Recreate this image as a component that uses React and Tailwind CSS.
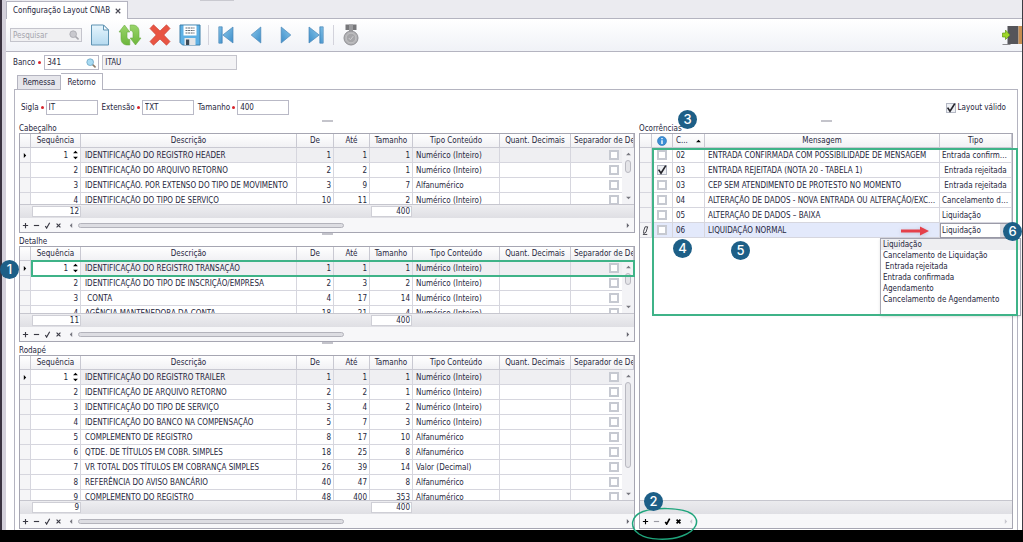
import clsx from 'clsx';

/* ── Data ─────────────────────────────────────────── */
const INT = 'Numérico (Inteiro)';
const ALFA = 'Alfanumérico';

const HEADER_ROWS = [
  [1, 'IDENTIFICAÇÃO DO REGISTRO HEADER', 1, 1, 1, INT],
  [2, 'IDENTIFICAÇÃO DO ARQUIVO RETORNO', 2, 2, 1, INT],
  [3, 'IDENTIFICAÇÃO. POR EXTENSO DO TIPO DE MOVIMENTO', 3, 9, 7, ALFA],
  [4, 'IDENTIFICAÇÃO DO TIPO DE SERVIÇO', 10, 11, 2, INT],
];

const DETAIL_ROWS = [
  [1, 'IDENTIFICAÇÃO DO REGISTRO TRANSAÇÃO', 1, 1, 1, INT],
  [2, 'IDENTIFICAÇÃO DO TIPO DE INSCRIÇÃO/EMPRESA', 2, 3, 2, INT],
  [3, '\u00a0CONTA', 4, 17, 14, INT],
  [4, 'AGÊNCIA MANTENEDORA DA CONTA', 18, 21, 4, INT],
];

const TRAILER_ROWS = [
  [1, 'IDENTIFICAÇÃO DO REGISTRO TRAILER', 1, 1, 1, INT],
  [2, 'IDENTIFICAÇÃO DE ARQUIVO RETORNO', 2, 2, 1, INT],
  [3, 'IDENTIFICAÇÃO DO TIPO DE SERVIÇO', 3, 4, 2, INT],
  [4, 'IDENTIFICAÇÃO DO BANCO NA COMPENSAÇÃO', 5, 7, 3, INT],
  [5, 'COMPLEMENTO DE REGISTRO', 8, 17, 10, ALFA],
  [6, 'QTDE. DE TÍTULOS EM COBR. SIMPLES', 18, 25, 8, ALFA],
  [7, 'VR TOTAL DOS TÍTULOS EM COBRANÇA SIMPLES', 26, 39, 14, 'Valor (Decimal)'],
  [8, 'REFERÊNCIA DO AVISO BANCÁRIO', 40, 47, 8, ALFA],
  [9, 'COMPLEMENTO DO REGISTRO', 48, 400, 353, ALFA],
];

const OCCURRENCES = [
  { code: '02', msg: 'ENTRADA CONFIRMADA COM POSSIBILIDADE DE MENSAGEM', type: 'Entrada confirmada' },
  { code: '03', msg: 'ENTRADA REJEITADA (NOTA 20 - TABELA 1)', type: '\u00a0Entrada rejeitada', checked: true },
  { code: '03', msg: 'CEP SEM ATENDIMENTO DE PROTESTO NO MOMENTO', type: '\u00a0Entrada rejeitada' },
  { code: '04', msg: 'ALTERAÇÃO DE DADOS - NOVA ENTRADA OU ALTERAÇÃO/EXCLUSÃO', type: 'Cancelamento de Liquidação' },
  { code: '05', msg: 'ALTERAÇÃO DE DADOS – BAIXA', type: 'Liquidação' },
];

const TYPES = [
  'Liquidação',
  'Cancelamento de Liquidação',
  '\u00a0Entrada rejeitada',
  'Entrada confirmada',
  'Agendamento',
  'Cancelamento de Agendamento',
];

const TH = 'border-b border-r border-[#c9c9d2] bg-linear-to-b from-white to-[#f1f1f4] p-0 font-normal text-center whitespace-nowrap overflow-hidden';
const TD = 'border-b border-r border-[#d6d6de] p-0 whitespace-nowrap overflow-hidden';

/* ── Small pieces ─────────────────────────────────── */
const Marker = ({ n, className }) => (
  <span className={clsx('absolute z-30 flex size-[19px] items-center justify-center rounded-full bg-[#1d5f87] font-[Inter,sans-serif] text-[13px] font-medium text-white', className)}>
    {n}
  </span>
);

const Check = ({ id, label, checked = false }) => (
  <span className="relative inline-block size-[10px] align-middle">
    <input
      id={id}
      type="checkbox"
      aria-label={label}
      defaultChecked={checked}
      className={clsx('block size-[10px] appearance-none', checked ? 'border border-[#b4b8c4] bg-[#eef0f4]' : 'border-2 border-[#c6c9d1] bg-white')}
    />
    {checked && (
      <svg viewBox="0 0 10 10" className="pointer-events-none absolute inset-0 size-[10px] overflow-visible" fill="none" stroke="#25252c" strokeWidth="1.7">
        <path d="M1.6 4.6 4 8.2 8.8.6" />
      </svg>
    )}
  </span>
);

const Arrow = ({ dir, className }) => {
  const d = { up: 'M0 4 3 1l3 3z', down: 'M0 1h6L3 4z', left: 'M4 0v6L1 3z', right: 'M1 0v6l3-3z' }[dir];
  const flat = dir === 'up' || dir === 'down';
  return (
    <svg viewBox={flat ? '0 0 6 5' : '0 0 5 6'} className={clsx(flat ? 'h-[4px] w-[5px]' : 'h-[5px] w-[4px]', 'shrink-0', className)} fill="currentColor">
      <path d={d} />
    </svg>
  );
};

const Dot = () => <span className="size-[3px] shrink-0 rounded-full bg-[#d8232a]" />;

const Field = ({ id, label, value }) => (
  <div className="flex items-center gap-[2px]">
    <label htmlFor={id}>{label}</label>
    <Dot />
    <input id={id} defaultValue={value} className="h-[15px] w-[52px] border border-[#b9b9c6] bg-white px-[2px] outline-none" />
  </div>
);

const Grip = () => <div className="mx-auto h-[2px] w-[11px] bg-[#c4c4cb]" />;

const Lens = ({ muted }) => (
  <svg viewBox="0 0 12 12" className="size-[10px] shrink-0">
    <path d="m7.5 7.5 3.3 3.2" stroke={muted ? '#a7a7ad' : '#8c7b68'} strokeWidth="2" strokeLinecap="round" />
    <circle cx="5" cy="5" r="4" fill={muted ? '#c9c9ce' : '#a8dbf3'} stroke={muted ? '#a9a9b0' : '#71a8c6'} />
  </svg>
);

/* ── Toolbar ──────────────────────────────────────── */
const ToolButton = ({ label, className, children }) => (
  <button type="button" aria-label={label} className={clsx('flex shrink-0 items-center justify-center', className)}>
    {children}
  </button>
);

const NavIcon = ({ flip, bar }) => (
  <svg viewBox="0 0 16 18" className={clsx('h-[18px] w-[16px]', flip && '-scale-x-100')} fill="url(#navBlue)" stroke="#4a86b8" strokeWidth=".7">
    {bar && <path d="M.8.8h3.400v16.400H.8z" />}
    {bar ? <path d="M15 1v16L4.800 9z" /> : <path d="M12.800 1v16L3.200 9z" />}
  </svg>
);

const Toolbar = () => (
  <div className="flex h-[33px] shrink-0 items-center border-b border-[#b4b4c0] bg-linear-to-b from-white to-[#f0f2f7] pl-1">
    <svg className="absolute size-0" aria-hidden="true">
      <defs>
        <linearGradient id="navBlue" x1="0" x2="1" y1="0" y2="1">
          <stop offset="0" stopColor="#8cc8ea" />
          <stop offset="1" stopColor="#3b8dca" />
        </linearGradient>
        <linearGradient id="pageBlue" x1="0" x2="0" y1="0" y2="1">
          <stop offset="0" stopColor="#e6f5fd" />
          <stop offset="1" stopColor="#b5daf0" />
        </linearGradient>
        <linearGradient id="leaf" x1="0" x2="0" y1="0" y2="1">
          <stop offset="0" stopColor="#9ad56b" />
          <stop offset="1" stopColor="#6db63c" />
        </linearGradient>
      </defs>
    </svg>
    <div className="mr-[7px] flex h-[14px] w-[72px] items-center border border-[#c4c4cc] bg-[#f0f0f2] px-[2px]">
      <input placeholder="Pesquisar" aria-label="Pesquisar" className="w-0 grow bg-transparent outline-none placeholder:text-[#a4a4ac]" />
      <Lens muted />
    </div>
    <ToolButton label="Novo" className="w-[22px]">
      <svg viewBox="0 0 20 22" className="h-[22px] w-[20px]">
        <path d="M1.5 1h12l5 5v15h-17z" fill="url(#pageBlue)" stroke="#5f93b3" />
        <path d="M13.5 1v5h5z" fill="#f3fafe" stroke="#5f93b3" strokeLinejoin="round" />
      </svg>
    </ToolButton>
    <ToolButton label="Atualizar" className="ml-[7px] w-[24px]">
      <svg viewBox="0 0 24 22" className="h-[22px] w-[24px]" fill="url(#leaf)" stroke="#6aab41" strokeWidth=".6" strokeLinejoin="round">
        <path d="M6.500 1 1 8h2v6.500C3 18.500 5.500 21 9.500 21h2.300v-5.500c-2-.2-2.800-1-2.800-2.800V8h2.800z" />
        <path d="M17.500 21 23 14h-2V7.500C21 3.500 18.500 1 14.500 1h-2.300v5.500c2 .2 2.800 1 2.800 2.800V14h-2.800z" />
      </svg>
    </ToolButton>
    <ToolButton label="Excluir" className="ml-[6px] w-[24px]">
      <svg viewBox="0 0 24 24" className="size-[24px]" fill="#e85443" stroke="#cc4436" strokeWidth=".7" strokeLinejoin="round">
        <path d="M2 5.500 5.500 1.800 12 8l6.500-6.200L22 5.500 15.800 12l6.200 6.500-3.500 3.700L12 16l-6.500 6.200L2 18.500 8.200 12z" />
      </svg>
    </ToolButton>
    <ToolButton label="Salvar" className="ml-[7px] w-[22px]">
      <svg viewBox="0 0 22 22" className="size-[22px]">
        <path d="M1 1h20v20H3.500L1 18.500z" fill="#5eb0e4" stroke="#3f7ea8" />
        <path d="M4.500 1.500h13v10h-13z" fill="#fff" />
        <path d="M6.500 4h9M6.500 6.500h9M6.500 9h9" stroke="#5d6670" strokeDasharray="2 .6" />
        <path d="M5.500 14h11v7h-11z" fill="#e4e6e8" />
        <path d="M7 15.500h3.200V21H7z" fill="#3d4a56" />
      </svg>
    </ToolButton>
    <span className="mx-[7px] h-[20px] w-px shrink-0 bg-[#d3d3dc]" />
    <div className="flex items-center gap-[14px] pl-[2px]">
      <ToolButton label="Primeiro"><NavIcon bar /></ToolButton>
      <ToolButton label="Anterior"><NavIcon /></ToolButton>
      <ToolButton label="Próximo"><NavIcon flip /></ToolButton>
      <ToolButton label="Último"><NavIcon flip bar /></ToolButton>
    </div>
    <span className="mx-[9px] h-[20px] w-px shrink-0 bg-[#d3d3dc]" />
    <ToolButton label="Homologar">
      <svg viewBox="0 0 16 22" className="h-[22px] w-[16px]">
        <path d="M2.500.5h11V6h-11z" fill="#77777a" />
        <path d="M6 .5h4v7H6z" fill="#9b9b9e" />
        <circle cx="8" cy="14" r="7" fill="#b3b3b6" stroke="#8f8f93" />
        <circle cx="8" cy="14" r="4.800" fill="#a6a6a9" stroke="#c6c6c8" strokeWidth=".8" />
        <path d="m5.800 14 1.600 1.800 2.800-3.600" fill="none" stroke="#cdcdd0" />
      </svg>
    </ToolButton>
    <ToolButton label="Sair" className="ml-auto">
      <svg viewBox="0 0 20 22" className="h-[22px] w-[20px]">
        <path d="M5.500 2h11v18h-11z" fill="#55555a" />
        <path d="M16.500 2H20v18h-3.500z" fill="#c68e52" />
        <path d="M.5 20.500h8" stroke="#8c8c90" />
        <path d="M.5 9h3V6L8 11l-4.500 4.500V13h-3z" fill="#9ed628" stroke="#5e9a12" strokeWidth=".7" />
      </svg>
    </ToolButton>
  </div>
);

/* ── Grid footer: row commands + horizontal scroll ── */
const RowCommands = ({ strong, scroll }) => (
  <div className="flex h-[14px] shrink-0 items-center bg-[#f7f7f9] text-[#3a3a44]">
    <div className="flex items-center gap-1 pl-[2px]">
      {[
        ['Adicionar', 'M4 1v6M1 4h6'],
        ['Remover', 'M1 4h6'],
        ['Confirmar', 'M1.500 4.500 3 7 6.500.8'],
        ['Cancelar', 'M1.800 1.800l4.400 4.400M6.200 1.800 1.800 6.200'],
      ].map(([label, d], i) => (
        <button key={label} type="button" aria-label={label}>
          <svg viewBox="0 0 8 8" className={clsx('size-[7px]', strong && i === 1 && 'text-[#9a9aa2]', strong && i !== 1 && 'text-black')} fill="none" stroke="currentColor" strokeWidth={strong && i > 1 ? 1.9 : 1.3}>
            <path d={d} />
          </svg>
        </button>
      ))}
    </div>
    <Arrow dir="left" className={clsx('ml-[7px]', scroll ? 'text-[#77777f]' : 'text-[#c9c9d0]')} />
    <div className="mx-[5px] grow">
      {scroll && <div className="h-[5px] w-[49%] rounded-sm border border-[#b3b3bb] bg-[#dddde2]" />}
    </div>
    <Arrow dir="right" className={clsx('mr-[4px]', scroll ? 'text-[#66666f]' : 'text-[#c9c9d0]')} />
  </div>
);

const VScroll = ({ thumb }) => (
  <div className="absolute top-[14px] right-0 bottom-0 flex w-[12px] flex-col items-center bg-[#f3f3f6] py-1 text-[#77777f]">
    <Arrow dir="up" />
    <div className={clsx('mt-1 w-[6px] rounded-sm border border-[#b9b9c1] bg-[#e4e4e8]', thumb)} />
    <Arrow dir="down" className="mt-auto" />
  </div>
);

/* ── Layout grid (Cabeçalho, Detalhe, Rodapé) ─────── */
const LayoutGrid = ({ title, rows, count, thumb, viewport, className, marker }) => (
  <section className={clsx('flex flex-col', className)}>
    <div className="h-[3px]"><Grip /></div>
    <h2 className="h-[10px] leading-[11px]">{title}</h2>
    <div className="relative flex min-h-0 grow flex-col border border-[#a6a6b2]">
      {marker && (
        <>
          <Marker n={marker} className="top-[13px] -left-[20px]" />
          <div className="pointer-events-none absolute top-[13px] -right-px left-[11px] z-20 h-[17px] border-2 border-[#3fb388]" />
        </>
      )}
      <div className={clsx('relative overflow-hidden', viewport)}>
        <table className="w-full table-fixed border-separate border-spacing-0">
          <colgroup>
            <col className="w-[11px]" />
            <col className="w-[50px]" />
            <col />
            <col className="w-[37px]" />
            <col className="w-[36px]" />
            <col className="w-[43px]" />
            <col className="w-[87px]" />
            <col className="w-[71px]" />
            <col className="w-[63px]" />
          </colgroup>
          <thead>
            <tr className="h-[14px]">
              <th className={TH} aria-label="Linha atual" />
              {['Sequência', 'Descrição', 'De', 'Até', 'Tamanho', 'Tipo Conteúdo', 'Quant. Decimais'].map((h) => (
                <th key={h} scope="col" className={TH}>{h}</th>
              ))}
              <th scope="col" className={clsx(TH, 'pl-[3px] text-left')}>Separador de Decimais</th>
            </tr>
          </thead>
          <tbody>
            {rows.map(([seq, desc, from, to, size, type], i) => (
              <tr key={seq} className={clsx('h-[15px]', i === 0 && 'bg-[#efeff2]')}>
                <td className={clsx(TD, 'bg-[#f5f5f7]')}>
                  {i === 0 && <Arrow dir="right" className="mx-auto block text-black" />}
                </td>
                <td className={clsx(TD, 'bg-white pr-[2px] text-right')}>
                  {i === 0 ? (
                    <div className="flex items-center justify-end gap-[5px]">
                      <input aria-label={`Sequência - ${title}`} defaultValue={seq} className="w-[30px] bg-transparent text-right outline-none" />
                      <span className="flex flex-col gap-[2px] text-black">
                        <Arrow dir="up" />
                        <Arrow dir="down" />
                      </span>
                    </div>
                  ) : seq}
                </td>
                <td className={clsx(TD, 'pl-[4px]')}>{desc}</td>
                <td className={clsx(TD, 'pr-[2px] text-right')}>{from}</td>
                <td className={clsx(TD, 'pr-[2px] text-right')}>{to}</td>
                <td className={clsx(TD, 'pr-[2px] text-right')}>{size}</td>
                <td className={clsx(TD, 'pl-[3px]')}>{type}</td>
                <td className={TD} />
                <td className={clsx(TD, 'pr-[14px] text-right leading-[10px]')}>
                  <Check label={`Separador de Decimais ${seq} - ${title}`} />
                </td>
              </tr>
            ))}
          </tbody>
        </table>
        <VScroll thumb={thumb} />
      </div>
      {/* totals */}
      <div className="flex h-[14px] shrink-0 items-center border-t border-[#c6c6ce] bg-linear-to-b from-[#eeeef1] to-[#dfdfe4]">
        <output className="ml-[12px] h-[11px] w-[49px] border border-[#cfcfd6] bg-white pr-px text-right leading-[9px]">{count}</output>
        <output className="mr-[222px] ml-auto h-[11px] w-[41px] border border-[#cfcfd6] bg-white pr-px text-right leading-[9px]">400</output>
      </div>
      <RowCommands scroll />
    </div>
  </section>
);

/* ── Occurrences grid ─────────────────────────────── */
const Occurrences = () => (
  <section className="flex min-w-0 flex-col">
    <div className="h-[3px]"><Grip /></div>
    <div className="relative h-[10px]">
      <h2 className="leading-[11px]">Ocorrências</h2>
      <Marker n={3} className="-top-[13px] left-[39px]" />
    </div>
    <div className="relative flex grow flex-col border border-[#a6a6b2]">
      <div className="pointer-events-none absolute top-[14px] -right-[6px] left-[12px] z-20 h-[168px] border-2 border-[#3fb388]" />
      <table className="w-full table-fixed border-separate border-spacing-0">
        <colgroup>
          <col className="w-[12px]" />
          <col className="w-[21px]" />
          <col className="w-[32px]" />
          <col />
          <col className="w-[72px]" />
        </colgroup>
        <thead>
          <tr className="h-[14px]">
            <th className={TH} aria-label="Linha atual" />
            <th className={TH} aria-label="Informação">
              <svg viewBox="0 0 10 10" className="mx-auto size-[10px]">
                <circle cx="5" cy="5" r="4.500" fill="#3d8fd6" stroke="#2a70b3" strokeWidth=".6" />
                <path d="M5 2v1.300M5 4.200V8" stroke="#fff" strokeWidth="1.400" />
              </svg>
            </th>
            <th scope="col" className={TH}>
              <span className="flex items-center justify-between px-[3px]">
                C... <Arrow dir="up" className="text-black" />
              </span>
            </th>
            <th scope="col" className={TH}>Mensagem</th>
            <th scope="col" className={TH}>Tipo</th>
          </tr>
        </thead>
        <tbody>
          {OCCURRENCES.map((o) => (
            <tr key={o.msg} className="h-[15px]">
              <td className={clsx(TD, 'bg-[#f5f5f7]')} />
              <td className={clsx(TD, 'text-center leading-[10px]')}><Check label={`Selecionar ${o.msg}`} checked={o.checked} /></td>
              <td className={clsx(TD, 'pl-[3px]')}>{o.code}</td>
              <td className={clsx(TD, 'truncate px-[3px]')}>{o.msg}</td>
              <td className={clsx(TD, 'truncate px-[2px]')}>{o.type}</td>
            </tr>
          ))}
          <tr className="h-[15px] bg-[#e3e9fb]">
            <td className={clsx(TD, 'bg-[#f5f5f7]')}>
              <svg viewBox="0 0 8 10" className="mx-auto h-[9px] w-[7px]" fill="none" stroke="#33333b">
                <path d="M3.500.8h3L4.500 7 2 8.500 1.800 6zM1 9.500h5" />
              </svg>
            </td>
            <td className={clsx(TD, 'text-center leading-[10px]')}><Check label="Selecionar LIQUIDAÇÃO NORMAL" /></td>
            <td className="relative border-r border-b border-[#d6d6de] p-0 pl-[3px]">
              06
              <Marker n={4} className="top-[16px] left-0" />
            </td>
            <td className="relative border-r border-b border-[#d6d6de] p-0 pl-[3px]">
              LIQUIDAÇÃO NORMAL
              <Marker n={5} className="top-[18px] left-[26px]" />
              <svg viewBox="0 0 28 10" className="absolute top-[3px] right-[10px] h-[10px] w-[28px] drop-shadow-sm" fill="#e5404a">
                <path d="M0 3.500h19V.5L28 5l-9 4.500v-3H0z" />
              </svg>
            </td>
            <td className="relative border border-[#9b9ba8] bg-white p-0">
              <div className="flex items-center">
                <select aria-label="Tipo" defaultValue="Liquidação" className="h-[12px] w-0 grow appearance-none bg-transparent pl-px outline-none">
                  {TYPES.map((t) => <option key={t}>{t}</option>)}
                </select>
                <span className="h-[13px] w-[11px] bg-[#dcdde3]" />
              </div>
              <Marker n={6} className="top-[-2px] -right-[11px]" />
              <ul role="listbox" aria-label="Opções de tipo" className="absolute top-[14px] -right-[10px] z-10 h-[78px] w-[141px] border border-[#a6a6b2] bg-white shadow-sm">
                {TYPES.map((t, i) => (
                  <li key={t} role="option" aria-selected={i === 0} className={clsx('h-[11px] pl-[2px] leading-[11px]', i === 0 && 'bg-[#eeeef1]')}>
                    {t}
                  </li>
                ))}
              </ul>
            </td>
          </tr>
        </tbody>
      </table>
      <div className="mt-auto h-[14px] border-t border-[#c6c6ce] bg-linear-to-b from-[#ebebee] to-[#dfdfe4]" />
      <div className="relative">
        <RowCommands strong />
        <Marker n={2} className="-top-[22px] left-[4px]" />
        <svg viewBox="0 0 68 34" className="pointer-events-none absolute -top-[7px] -left-[9px] z-20 h-[34px] w-[68px]" fill="none" stroke="#1fa57c" strokeWidth="1.500">
          <path d="M12 4.500C24 .5 50 0 61 7c9 7 4 17-10 22-14 5-34 4-43-2C-2 20 0 9 12 4.500Z" />
        </svg>
      </div>
    </div>
  </section>
);

/* ── Page ─────────────────────────────────────────── */
export default function App() {
  return (
    <div className="flex min-h-screen flex-col overflow-hidden bg-black pb-3 font-['DejaVu_Sans_Condensed','DejaVu_Sans',sans-serif] text-[8px] leading-[11px] text-[#26263c]">
      <div className="flex grow flex-col border-r border-l-2 border-r-[#3c3c44] border-l-[#3a3340] bg-white">
        <div className="flex grow flex-col border-l-4 border-[#d3d0da]">
          {/* document tabs */}
          <div className="flex h-[19px] shrink-0 items-end border-b border-[#b4b4c0] bg-[#ebebf0]">
            <div className="-mb-px flex h-[18px] w-[122px] items-center justify-between border border-b-0 border-[#b4b4c0] bg-white px-[6px]">
              <span>Configuração Layout CNAB</span>
              <button type="button" aria-label="Fechar">
                <svg viewBox="0 0 8 8" className="size-[6px]" stroke="#4a4a55" strokeWidth="1.500"><path d="m1 1 6 6M7 1 1 7" /></svg>
              </button>
            </div>
            <span className="ml-[72px] h-px w-[34px] self-start bg-[#c9c9d0]" />
          </div>

          <Toolbar />

          {/* bank */}
          <div className="flex h-[21px] shrink-0 items-center gap-[3px] pl-[7px]">
            <label htmlFor="bank">Banco</label>
            <Dot />
            <div className="flex h-[15px] w-[55px] items-center border border-[#b9b9c6] px-[2px]">
              <input id="bank" defaultValue="341" className="w-0 grow outline-none" />
              <Lens />
            </div>
            <input aria-label="Nome do banco" readOnly value="ITAÚ" className="h-[15px] w-[135px] border border-[#c4c4cc] bg-[#f3f3f5] px-[2px] leading-[13px] outline-none" />
          </div>

          {/* layout tabs */}
          <div role="tablist" className="z-10 -mb-px flex shrink-0 items-end pl-[11px]">
            <button type="button" role="tab" aria-selected="false" className="h-[15px] w-[44px] border border-[#b4b4c0] bg-[#e6e6eb]">Remessa</button>
            <button type="button" role="tab" aria-selected="true" className="h-[17px] w-[42px] border border-b-0 border-l-0 border-[#b4b4c0] bg-white">Retorno</button>
          </div>

          <div className="mr-1 ml-2 flex grow flex-col border border-b-0 border-[#b4b4c0] pr-1 pb-px pl-1">
            <div className="flex gap-1 pt-[10px] pb-[5px] pl-[2px]">
              <Field id="sigla" label="Sigla" value="IT" />
              <Field id="ext" label="Extensão" value="TXT" />
              <Field id="size" label="Tamanho" value="400" />
              <div className="mr-[7px] ml-auto flex items-center gap-[2px]">
                <Check id="valid" checked />
                <label htmlFor="valid">Layout válido</label>
              </div>
            </div>

            <div className="grid grow grid-cols-[616fr_374fr] gap-1">
              <div className="flex min-w-0 flex-col">
                <LayoutGrid title="Cabeçalho" rows={HEADER_ROWS} count={12} viewport="h-[70px] shrink-0" thumb="h-[13px]" />
                <LayoutGrid title="Detalhe" rows={DETAIL_ROWS} count={11} viewport="h-[66px] shrink-0" thumb="h-[12px]" marker={1} />
                <LayoutGrid title="Rodapé" rows={TRAILER_ROWS} count={9} viewport="h-[144px] grow" thumb="h-[86px]" className="grow" />
              </div>
              <Occurrences />
            </div>
          </div>
        </div>
      </div>
    </div>
  );
}
